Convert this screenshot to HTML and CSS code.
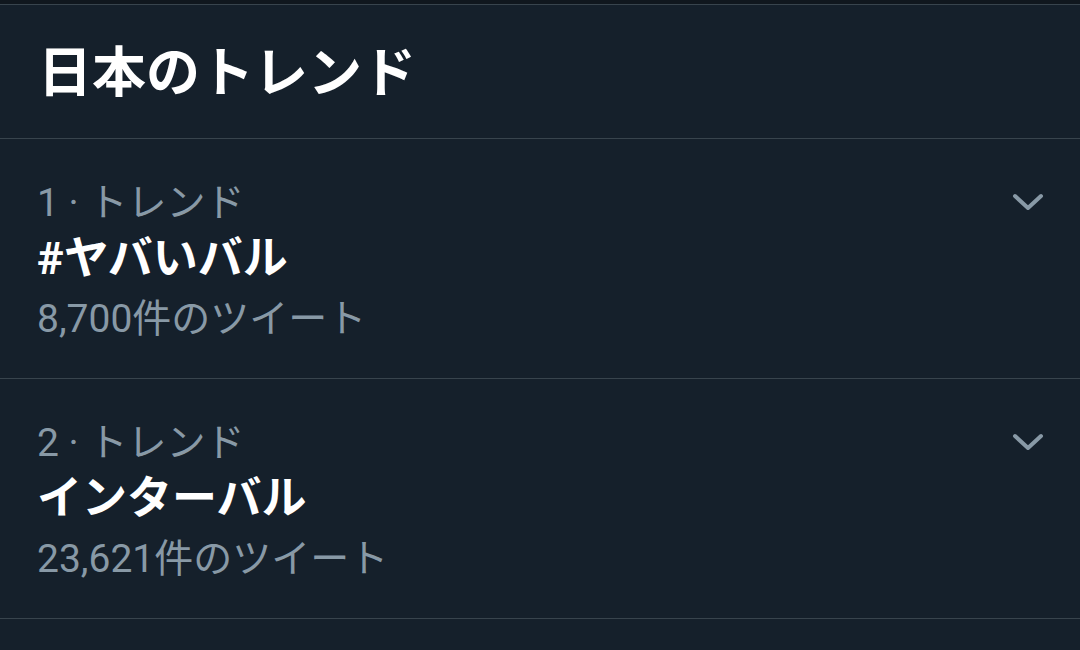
FILE: index.html
```html
<!DOCTYPE html>
<html lang="ja">
<head>
    <meta charset="UTF-8">
    <meta name="viewport" content="width=device-width, initial-scale=1.0">
    <title>日本のトレンド</title>
    <link rel="stylesheet" href="styles.css">
</head>
<body>
    <div class="topbar"></div>

    <div class="panel">
        <h1 class="panel-title">日本のトレンド</h1>

        <!-- trend rows -->
        <div class="trend">
            <div class="trend-body">
                <div class="trend-meta">1 · トレンド</div>
                <div class="trend-name">#ヤバいバル</div>
                <div class="trend-count">8,700件のツイート</div>
            </div>
            <svg class="chevron" viewBox="0 0 32 20" width="32" height="20">
                <path d="M3 3 L16 15 L29 3" fill="none" stroke="#8899a6" stroke-width="4" stroke-linecap="round" stroke-linejoin="round"/>
            </svg>
        </div>

        <div class="trend">
            <div class="trend-body">
                <div class="trend-meta">2 · トレンド</div>
                <div class="trend-name">インターバル</div>
                <div class="trend-count">23,621件のツイート</div>
            </div>
            <svg class="chevron" viewBox="0 0 32 20" width="32" height="20">
                <path d="M3 3 L16 15 L29 3" fill="none" stroke="#8899a6" stroke-width="4" stroke-linecap="round" stroke-linejoin="round"/>
            </svg>
        </div>
    </div>
</body>
</html>
```

FILE: styles.css
```css
body {
    margin: 0;
    padding: 0;
    background-color: #15202b;
    font-family: Roboto, "Noto Sans CJK JP", sans-serif;
    color: #ffffff;
    overflow: hidden;
}

.topbar {
    height: 4px;
    background-color: #10171e;
    border-bottom: 1px solid #38444d;
}

.panel-title {
    margin: 0;
    height: 126px;
    padding-left: 38px;
    padding-bottom: 7px;
    display: flex;
    align-items: center;
    font-size: 54px;
    font-weight: bold;
    border-bottom: 1px solid #38444d;
}

.trend {
    display: flex;
    justify-content: space-between;
    align-items: flex-start;
    height: 240px;
    padding: 39px 36px 0 37px;
    box-sizing: border-box;
    border-bottom: 1px solid #38444d;
}

.trend-meta {
    font-size: 39px;
    line-height: 50px;
    color: #8899a6;
}

.trend-name {
    font-size: 45px;
    line-height: 62px;
    font-weight: bold;
}

.trend-count {
    font-size: 39px;
    line-height: 58px;
    color: #8899a6;
}

.chevron {
    margin-top: 15px;
}
```
